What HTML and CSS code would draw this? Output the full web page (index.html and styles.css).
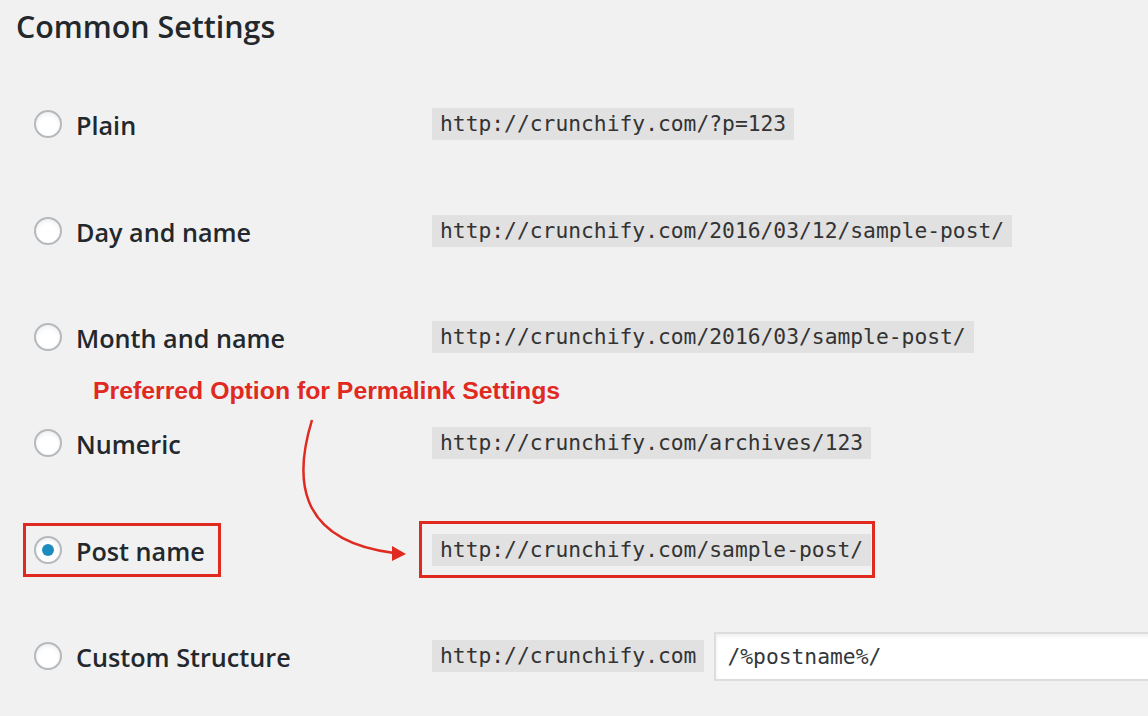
FILE: index.html
```html
<!DOCTYPE html>
<html>
<head>
<meta charset="utf-8">
<link rel="stylesheet" href="styles.css">
</head>
<body>
<div class="page">
  <h2 class="title">Common Settings</h2>
  <div class="table">
    <div class="row">
      <div class="opt"><label class="choice"><span class="radio"></span><span class="lbl">Plain</span></label></div>
      <div class="val"><code>http://crunchify.com/?p=123</code></div>
    </div>
    <div class="row">
      <div class="opt"><label class="choice"><span class="radio"></span><span class="lbl">Day and name</span></label></div>
      <div class="val"><code>http://crunchify.com/2016/03/12/sample-post/</code></div>
    </div>
    <div class="row">
      <div class="opt"><label class="choice"><span class="radio"></span><span class="lbl">Month and name</span></label></div>
      <div class="val"><code>http://crunchify.com/2016/03/sample-post/</code></div>
    </div>
    <div class="row">
      <div class="opt"><label class="choice"><span class="radio"></span><span class="lbl">Numeric</span></label></div>
      <div class="val"><code>http://crunchify.com/archives/123</code></div>
    </div>
    <div class="row">
      <div class="opt"><label class="choice hl"><span class="radio checked"></span><span class="lbl">Post name</span></label></div>
      <div class="val"><span class="code-hl"><code>http://crunchify.com/sample-post/</code></span></div>
    </div>
    <div class="row">
      <div class="opt"><label class="choice"><span class="radio"></span><span class="lbl">Custom Structure</span></label></div>
      <div class="val"><code>http://crunchify.com</code><span class="input">/%postname%/</span></div>
    </div>
  </div>
  <div class="note">Preferred Option for Permalink Settings</div>
  <svg class="arrow" width="1148" height="716" viewBox="0 0 1148 716">
    <path d="M312 420 C 296 472, 292 540, 394 553" fill="none" stroke="#e0291f" stroke-width="2.5"/>
    <polygon points="406,554 392,546 392,561" fill="#e0291f"/>
  </svg>
</div>
</body>
</html>
```

FILE: styles.css
```css
html, body {
  margin: 0;
  padding: 0;
  background: #f1f1f1;
}
.page {
  position: relative;
  width: 1148px;
  height: 716px;
  overflow: hidden;
  font-family: "Open Sans", "Liberation Sans", sans-serif;
  color: #23282d;
}
.title {
  margin: 0;
  padding: 7px 0 0 16px;
  font-size: 30.4px;
  font-weight: 600;
  line-height: 40px;
  height: 64px;
  box-sizing: border-box;
}
.table {
  display: flex;
  flex-direction: column;
  padding-top: 7px;
}
.row {
  display: flex;
  align-items: center;
  height: 106.4px;
}
.opt {
  display: flex;
  align-items: center;
  width: 432px;
  padding-left: 34px;
  box-sizing: border-box;
  flex: none;
}
.choice {
  display: flex;
  align-items: center;
}
.radio {
  width: 28px;
  height: 28px;
  box-sizing: border-box;
  border: 2px solid #b4b9be;
  border-radius: 50%;
  background: #fff;
  box-shadow: inset 0 2px 4px rgba(0,0,0,0.07);
  display: flex;
  align-items: center;
  justify-content: center;
  flex: none;
}
.radio.checked::after {
  content: "";
  width: 12px;
  height: 12px;
  border-radius: 50%;
  background: #1e8cbe;
}
.lbl {
  margin-left: 14px;
  font-size: 25.2px;
  font-weight: 600;
  line-height: 32px;
  position: relative;
  top: 1px;
}
.hl {
  border: 3px solid #e0291f;
  padding: 8px 13px 8px 8px;
  margin: -11px 0 -11px -11px;
}
.val {
  display: flex;
  align-items: center;
}
code {
  font-family: "DejaVu Sans Mono", "Liberation Mono", monospace;
  font-size: 21.3px;
  line-height: 32px;
  height: 32px;
  padding: 0 8px;
  background: #e1e1e1;
  color: #333;
  display: block;
}
.code-hl {
  display: block;
  border: 3px solid #e0291f;
  padding: 10px 1px 9px 10px;
  margin-left: -13px;
}
.input {
  display: block;
  margin-left: 10px;
  width: 520px;
  height: 49px;
  box-sizing: border-box;
  background: #fff;
  border: 2px solid #ddd;
  box-shadow: inset 0 2px 4px rgba(0,0,0,0.07);
  padding-left: 11px;
  font-family: "DejaVu Sans Mono", "Liberation Mono", monospace;
  font-size: 21.3px;
  line-height: 45px;
  color: #32373c;
  flex: none;
}
.note {
  position: absolute;
  left: 93px;
  top: 375px;
  font-family: "Liberation Sans", Arial, sans-serif;
  font-weight: 700;
  font-size: 24.8px;
  line-height: 32px;
  color: #e0291f;
}
.arrow {
  position: absolute;
  left: 0;
  top: 0;
  pointer-events: none;
}
```
